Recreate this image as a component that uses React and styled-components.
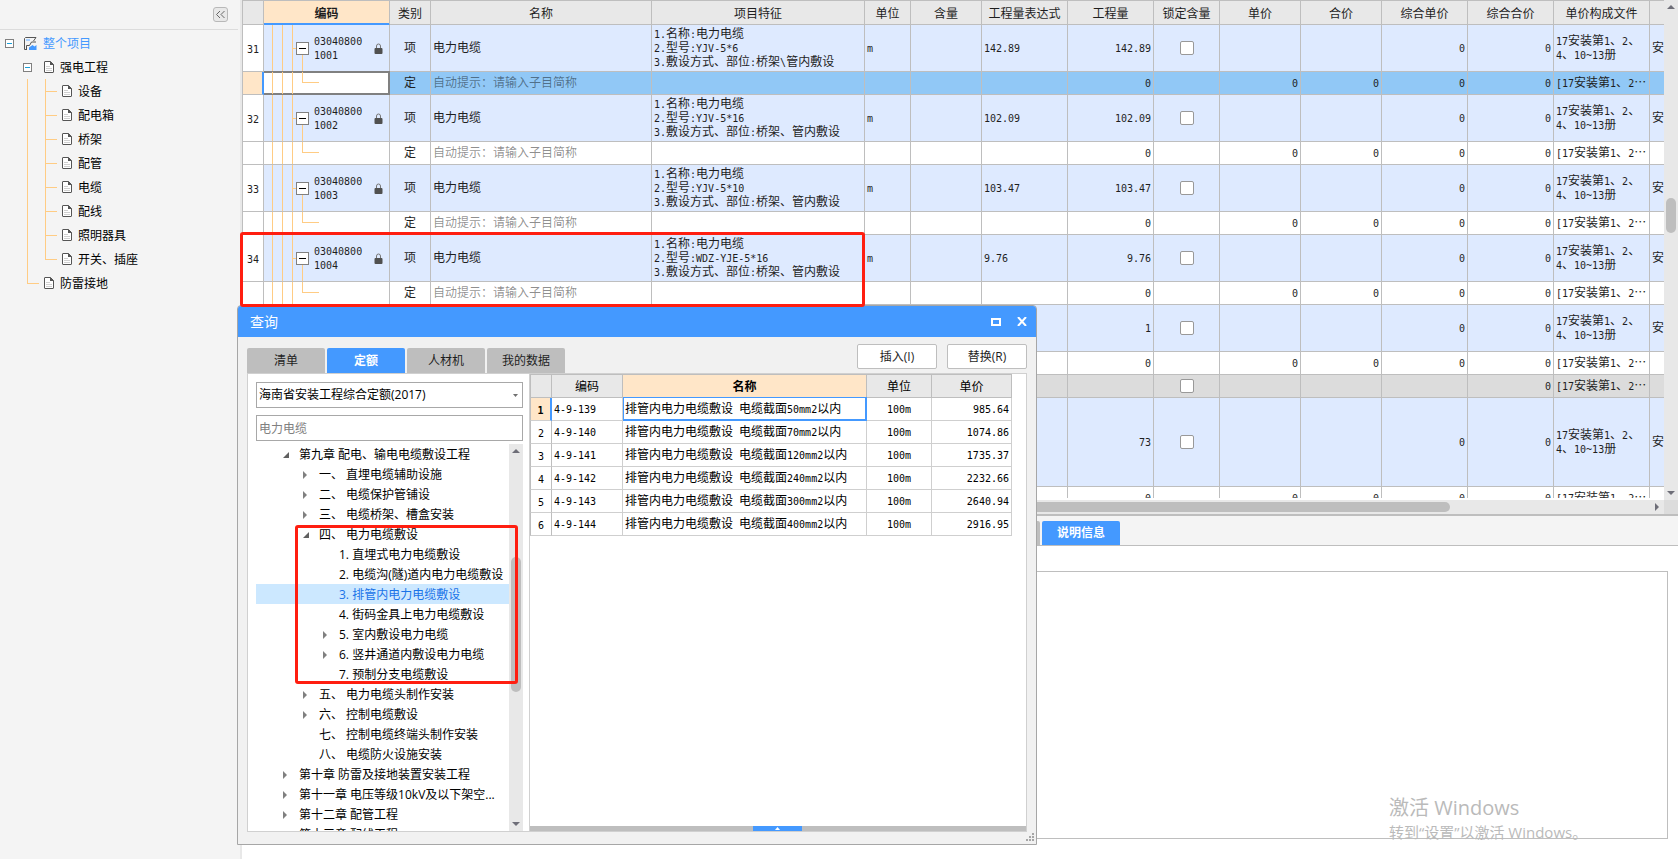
import { useState } from "react";
import styled, { createGlobalStyle, css } from "styled-components";

const uiFont = `"Open Sans", "Noto Sans CJK SC", sans-serif`;
const gridFont = `"Noto Sans CJK SC", sans-serif`;

const line = "#bebebe";
const blue = "#4499ff";
const cream = "#ffe6c8";
const guide = "#ffcc84";
const chrome = "#e8e8e8";

const GlobalStyle = createGlobalStyle`
  * {
    box-sizing: border-box;
  }

  body {
    margin: 0;
    font-family: ${uiFont};
    font-size: 12px;
    line-height: 14px;
    color: #000;
    background: #fff;
  }

  button, input, select {
    font: inherit;
    color: inherit;
    margin: 0;
    padding: 0;
  }

  ul {
    list-style: none;
    margin: 0;
    padding: 0;
  }
`;

const Page = styled.div`
  position: relative;
  display: flex;
  height: 100vh;
  overflow: hidden;
`;

/* ---------- sidebar ---------- */

const Sidebar = styled.aside`
  flex: 0 0 242px;
  background: #f4f4f4;
  border-right: 2px solid ${chrome};
`;

const SidebarHeader = styled.div`
  display: flex;
  align-items: center;
  justify-content: flex-end;
  height: 30px;
  margin-right: 2px;
  padding-right: 10px;
  border-bottom: 1px solid #dcdcdc;
`;

const CollapseButton = styled.button`
  display: flex;
  align-items: center;
  justify-content: center;
  width: 15px;
  height: 15px;
  border: 1px solid #b8b8b8;
  border-radius: 3px;
  background: ${chrome};
`;

const ProjectTree = styled.ul`
  padding-top: 1px;
`;

const ProjectRow = styled.li`
  display: flex;
  align-items: center;
  height: 24px;
  padding-left: ${(props) => props.$indent}px;
  color: ${(props) => (props.$active ? blue : "#000")};

  svg {
    margin-right: 6px;
  }
`;

const ProjectName = styled.span`
  padding-top: 2px;
`;

const Toggle = styled.button`
  display: flex;
  align-items: center;
  justify-content: center;
  width: 9px;
  height: 9px;
  margin-right: ${(props) => props.$gap}px;
  border: 1px solid #808080;
  background: #fff;

  &::after {
    content: "";
    width: 5px;
    height: 1px;
    background: #1a9fd8;
  }
`;

const PassLine = styled.span`
  align-self: stretch;
  width: 18px;
  border-left: 1px solid ${guide};
`;

const Branch = styled.span`
  display: flex;
  flex-direction: column;
  align-self: stretch;
  width: 12px;
  margin-right: 5px;

  &::before,
  &::after {
    content: "";
    flex: 1;
    border-left: 1px solid ${guide};
  }

  &::before {
    border-bottom: 1px solid ${guide};
  }

  ${(props) =>
    props.$last &&
    css`
      &::after {
        border-left-color: transparent;
      }
    `}
`;

/* ---------- main grid ---------- */

const Main = styled.main`
  flex: 1;
  min-width: 0;
  display: grid;
  grid-template-rows: 516fr 343fr;
`;

const GridPanel = styled.section`
  display: grid;
  grid-template-columns: minmax(0, 1fr) 14px;
  grid-template-rows: minmax(0, 1fr) 14px;
  min-height: 0;
  border-bottom: 2px solid ${line};
`;

const GridBody = styled.div`
  overflow: hidden;
  border-bottom: 2px solid #fff;
`;

const Corner = styled.div`
  background: #dcdcdc;
`;

const Table = styled.table`
  width: ${(props) => (props.$fit ? "0" : "100%")};
  table-layout: fixed;
  border-collapse: separate;
  border-spacing: 0;
  font-family: ${gridFont};
  color: ${(props) => (props.$fit ? "#000" : "#1e1e1e")};
  --rule: ${(props) => (props.$fit ? "#cfcfcf" : line)};
`;

const HeadCell = styled.th`
  height: ${(props) => props.$height}px;
  padding: 0;
  overflow: hidden;
  white-space: nowrap;
  font-weight: ${(props) => (props.$active ? 700 : 400)};
  background: ${(props) => (props.$active ? cream : chrome)};
  border: 1px solid ${line};
  border-left-width: 0;

  &:first-child {
    border-left-width: 1px;
  }

  ${(props) =>
    props.$underline &&
    css`
      border-bottom-color: ${blue};
      box-shadow: inset 0 -1px ${blue};
    `}
`;

const rowColors = {
  item: "#deeaff",
  quota: "#fff",
  selected: "#91c8f6",
  section: "#dcdcdc",
};

const Row = styled.tr`
  height: ${(props) => props.$height}px;
  background: ${(props) => rowColors[props.$kind]};
`;

const Cell = styled.td`
  padding: 0 2px 2px;
  overflow: hidden;
  white-space: pre;
  text-align: ${(props) => props.$align || "left"};
  color: ${(props) => (props.$hint ? "rgba(0, 0, 0, 0.45)" : "inherit")};
  border-right: 1px solid var(--rule);
  border-bottom: 1px solid var(--rule);

  ${(props) =>
    props.$focused &&
    css`
      border-color: ${blue};
      box-shadow: inset -1px -1px ${blue}, inset 1px 0 ${blue}, 0 -1px ${blue};
    `}
`;

const NumberCell = styled(Cell)`
  padding: 0;
  text-align: center;
  background: ${(props) => (props.$current ? cream : "#fff")};
  font-weight: ${(props) => (props.$current ? 700 : 400)};
  border-left: 1px solid ${line};
  border-right-color: ${line};
  ${(props) => props.$current && `border-right: 2px solid ${blue};`}
`;

const CodeCell = styled(Cell)`
  padding: 0;
  ${(props) =>
    props.$edit &&
    css`
      background: #fff;
      border-color: #808080;
      box-shadow: inset 0 1px #808080, inset -1px -1px #808080, 0 -1px #808080;
    `}
`;

const CodeBox = styled.div`
  display: flex;
  align-items: center;
  height: ${(props) => props.$height - 1}px;
  padding-right: 6px;
`;

const Guide = styled.span`
  align-self: stretch;
  flex: none;
  width: 10px;
  border-right: 1px solid ${guide};

  &:first-child {
    width: 9px;
  }
`;

const Stub = styled.span`
  flex: none;
  width: 3px;
  height: 1px;
  background: ${guide};
`;

const NodeColumn = styled.span`
  align-self: stretch;
  display: flex;
  flex-direction: column;
  align-items: center;
  flex: none;
  width: 13px;
  margin-right: 5px;

  &::before,
  &::after {
    content: "";
    flex: 1;
    width: 1px;
  }

  &::after {
    background: ${guide};
  }
`;

const NodeToggle = styled.button`
  display: flex;
  align-items: center;
  justify-content: center;
  width: 13px;
  height: 13px;
  border: 1px solid #808080;
  background: #fff;

  &::after {
    content: "";
    width: 7px;
    height: 1px;
    background: #000;
  }
`;

const Elbow = styled.span`
  align-self: flex-start;
  width: 17px;
  height: 50%;
  margin-left: 9px;
  border-left: 1px solid ${guide};
  border-bottom: 1px solid ${guide};
`;

const Code = styled.span`
  flex: 1;
  padding-bottom: 3px;
`;

const Latin = styled.span`
  font-family: "DejaVu Sans Mono", monospace;
  font-size: 10px;
  line-height: 8px;
`;

const Check = styled.input`
  appearance: none;
  display: block;
  width: 14px;
  height: 14px;
  margin: 2px auto 0;
  border: 1px solid #999;
  border-radius: 2px;
  background: #fff;

  &:checked {
    background: ${blue};
  }
`;

/* ---------- scroll bars ---------- */

const Track = styled.div`
  display: grid;
  ${(props) =>
    props.$horizontal ? "grid-template-columns" : "grid-template-rows"}: 14px ${(
    props
  ) => props.$parts.map((n) => `${n}fr`).join(" ")} 14px;
  min-height: 0;
  place-items: center;
  background: ${chrome};
`;

const Thumb = styled.div`
  width: ${(props) => (props.$horizontal ? "100%" : "10px")};
  height: ${(props) => (props.$horizontal ? "10px" : "100%")};
  border-radius: 5px;
  background: ${line};
`;

/* ---------- lower panel ---------- */

const DetailPanel = styled.section`
  display: flex;
  flex-direction: column;
  min-height: 0;
`;

const DetailTabs = styled.div`
  display: flex;
  align-items: flex-end;
  gap: 2px;
  height: 30px;
  padding-left: 720px;
  background: #f4f4f4;
  border-bottom: 1px solid ${line};
`;

const Tab = styled.button`
  flex: none;
  width: 78px;
  height: ${(props) => props.$height || 25}px;
  border: 0;
  border-radius: 2px 2px 0 0;
  color: ${(props) => (props.$active ? "#fff" : "#1e1e1e")};
  font-weight: ${(props) => (props.$active ? 700 : 400)};
  background: ${(props) => (props.$active ? blue : line)};
`;

const DetailBox = styled.div`
  flex: 1;
  margin: 25px 10px 20px;
  border: 1px solid ${line};
`;

const Watermark = styled.div`
  position: absolute;
  right: 89px;
  bottom: 15px;
  width: 200px;
  color: #bababa;
  font-size: 15px;
  line-height: 24px;
  white-space: nowrap;
  pointer-events: none;

  strong {
    display: block;
    font-size: 20px;
    font-weight: 400;
  }
`;

/* ---------- query window ---------- */

const Window = styled.section`
  position: absolute;
  left: 237px;
  top: 305px;
  display: flex;
  flex-direction: column;
  width: 800px;
  height: 540px;
  border: 1px solid #a6a6a6;
  border-radius: 4px 4px 0 0;
  background: #f1f1f1;
`;

const TitleBar = styled.header`
  display: flex;
  align-items: center;
  gap: 16px;
  height: 31px;
  padding: 0 9px 0 12px;
  border-radius: 3px 3px 0 0;
  color: #fff;
  font-size: 14px;
  background: ${blue};
`;

const Title = styled.span`
  flex: 1;
`;

const TitleButton = styled.button`
  display: flex;
  border: 0;
  background: none;
`;

const Toolbar = styled.div`
  display: flex;
  align-items: flex-end;
  height: 36px;
  padding: 0 9px;
`;

const Tabs = styled.div`
  display: flex;
  gap: 2px;
  flex: 1;
`;

const ActionButton = styled.button`
  width: 80px;
  height: 25px;
  margin: 0 0 4px 10px;
  border: 1px solid ${line};
  border-radius: 2px;
  color: #1e1e1e;
  background: #fff;
`;

const Panel = styled.div`
  flex: 1;
  display: flex;
  min-height: 0;
  margin: 0 9px 12px;
  border: 1px solid #d0d0d0;
  background: #fff;
`;

const Catalog = styled.div`
  display: flex;
  flex-direction: column;
  flex: none;
  width: 282px;
  padding: 8px 6px 0 8px;
  border-right: 1px solid #d0d0d0;
`;

const SelectBox = styled.label`
  display: grid;
  align-items: center;
  margin-bottom: 7px;

  > * {
    grid-area: 1 / 1;
  }

  svg {
    justify-self: end;
    margin-right: 5px;
    pointer-events: none;
  }
`;

const field = css`
  width: 100%;
  height: 26px;
  padding: 0 2px;
  border: 1px solid #a8a8a8;
  border-radius: 0;
  background: #fff;
`;

const Select = styled.select`
  ${field}
  appearance: none;
`;

const Search = styled.input`
  ${field}
  margin-bottom: 3px;
  color: #808080;
`;

const TreeArea = styled.div`
  flex: 1;
  display: grid;
  grid-template-columns: minmax(0, 1fr) 14px;
  min-height: 0;
`;

const CatalogTree = styled.ul`
  overflow: hidden;
`;

const CatalogRow = styled.li`
  display: flex;
  align-items: center;
  height: 20px;
  padding-top: 2px;
  padding-left: ${(props) => 27 + props.$level * 20}px;
  white-space: pre;
  color: ${(props) => (props.$active ? "#1a73e8" : "#000")};
  background: ${(props) => (props.$active ? "#cce8ff" : "transparent")};
`;

const Caret = styled.span`
  display: flex;
  flex: none;
  width: 16px;
`;

const Results = styled.div`
  flex: 1;
  min-width: 0;
  display: flex;
  flex-direction: column;
  justify-content: space-between;
`;

const Splitter = styled.div`
  display: flex;
  justify-content: center;
  height: 5px;
  padding-right: 2px;
  background: ${line};
`;

const SplitterHandle = styled.button`
  display: flex;
  align-items: center;
  justify-content: center;
  width: 49px;
  height: 5px;
  border: 0;
  background: ${blue};
`;

const Grip = styled.svg`
  position: absolute;
  right: 2px;
  bottom: 3px;
`;

const Marker = styled.div`
  position: absolute;
  left: ${(props) => props.$x}px;
  top: ${(props) => props.$y}px;
  width: ${(props) => props.$w}px;
  height: ${(props) => props.$h}px;
  border: 3px solid #ff1e10;
  border-radius: 3px;
  pointer-events: none;
`;

/* ---------- data ---------- */

const columns = [
  { title: "", width: 22 },
  { title: "编码", width: 126 },
  { title: "类别", width: 41 },
  { title: "名称", width: 221 },
  { title: "项目特征", width: 213 },
  { title: "单位", width: 46 },
  { title: "含量", width: 71 },
  { title: "工程量表达式", width: 86 },
  { title: "工程量", width: 86 },
  { title: "锁定含量", width: 66 },
  { title: "单价", width: 81 },
  { title: "合价", width: 81 },
  { title: "综合单价", width: 86 },
  { title: "综合合价", width: 86 },
  { title: "单价构成文件", width: 96 },
  { title: "", width: 86 },
];

const fileLong = "17安装第1、2、\n4、10~13册";
const fileShort = "[17安装第1、2…";

const item = (no, code, model, amount, place = "桥架、管内敷设") => ({
  kind: "item",
  height: 47,
  no,
  code,
  type: "项",
  name: "电力电缆",
  feature: `1.名称:电力电缆\n2.型号:${model}\n3.敷设方式、部位:${place}`,
  unit: "m",
  formula: amount,
  amount,
  check: true,
  total: "0",
  file: fileLong,
  extra: "安",
});

const quota = (kind = "quota") => ({
  kind,
  height: 23,
  type: "定",
  hint: "自动提示：请输入子目简称",
  amount: "0",
  price: "0",
  total: "0",
  file: fileShort,
});

const rows = [
  item("31", "03040800\n1001", "YJV-5*6", "142.89", "桥架\\管内敷设"),
  quota("selected"),
  item("32", "03040800\n1002", "YJV-5*16", "102.09"),
  quota(),
  item("33", "03040800\n1003", "YJV-5*10", "103.47"),
  quota(),
  item("34", "03040800\n1004", "WDZ-YJE-5*16", "9.76"),
  quota(),
  { kind: "item", height: 47, amount: "1", check: true, total: "0", file: fileLong, extra: "安" },
  { kind: "quota", height: 23, amount: "0", price: "0", total: "0", file: fileShort },
  { kind: "section", height: 23, check: true, sum: "0", file: fileShort },
  { kind: "item", height: 89, amount: "73", check: true, total: "0", file: fileLong, extra: "安" },
  { kind: "quota", height: 23, amount: "0", price: "0", total: "0", file: fileShort },
];

const devices = ["设备", "配电箱", "桥架", "配管", "电缆", "配线", "照明器具", "开关、插座"];

const catalog = [
  { level: 0, caret: "open", text: "第九章 配电、输电电缆敷设工程" },
  { level: 1, caret: "closed", text: "一、 直埋电缆辅助设施" },
  { level: 1, caret: "closed", text: "二、 电缆保护管铺设" },
  { level: 1, caret: "closed", text: "三、 电缆桥架、槽盒安装" },
  { level: 1, caret: "open", text: "四、 电力电缆敷设" },
  { level: 2, text: "1. 直埋式电力电缆敷设" },
  { level: 2, text: "2. 电缆沟(隧)道内电力电缆敷设" },
  { level: 2, text: "3. 排管内电力电缆敷设" },
  { level: 2, text: "4. 街码金具上电力电缆敷设" },
  { level: 2, caret: "closed", text: "5. 室内敷设电力电缆" },
  { level: 2, caret: "closed", text: "6. 竖井通道内敷设电力电缆" },
  { level: 2, text: "7. 预制分支电缆敷设" },
  { level: 1, caret: "closed", text: "五、 电力电缆头制作安装" },
  { level: 1, caret: "closed", text: "六、 控制电缆敷设" },
  { level: 1, text: "七、 控制电缆终端头制作安装" },
  { level: 1, text: "八、 电缆防火设施安装" },
  { level: 0, caret: "closed", text: "第十章 防雷及接地装置安装工程" },
  { level: 0, caret: "closed", text: "第十一章 电压等级10kV及以下架空..." },
  { level: 0, caret: "closed", text: "第十二章 配管工程" },
  { level: 0, caret: "closed", text: "第十三章 配线工程" },
];

const resultColumns = [
  { title: "", width: 22 },
  { title: "编码", width: 71 },
  { title: "名称", width: 244 },
  { title: "单位", width: 65 },
  { title: "单价", width: 80 },
];

const results = [
  { code: "4-9-139", size: 50, price: "985.64" },
  { code: "4-9-140", size: 70, price: "1074.86" },
  { code: "4-9-141", size: 120, price: "1735.37" },
  { code: "4-9-142", size: 240, price: "2232.66" },
  { code: "4-9-143", size: 300, price: "2640.94" },
  { code: "4-9-144", size: 400, price: "2916.95" },
];

/* ---------- icons ---------- */

const PageIcon = () => (
  <svg width="10" height="12" viewBox="0 0 10 12" fill="none">
    <path d="M1 .5h5.5l3 3V11a.5.5 0 0 1-.5.5H1A.5.5 0 0 1 .5 11V1A.5.5 0 0 1 1 .5z" fill="#fff" stroke="#555" />
    <path d="M6 0l4 4H6z" fill="#555" />
    <path d="M2 5.5h4M2 7.5h6M2 9.5h6" stroke="#d0d0d0" />
  </svg>
);

const ProjectIcon = () => (
  <svg width="13" height="13" viewBox="0 0 13 13" fill="none">
    <path d="M3 12.500H.5V1.500L1.500.5H12L9.500 4" stroke="#555" />
    <path d="M2 2h4v2H2z" fill="#a8d0ff" />
    <path d="M2.500 12V8.500h3l2-3.500H12" stroke="#555" />
    <path d="M5 13v-2.500L8.500 8l2 1.500L12.500 8v5z" fill={blue} />
  </svg>
);

const LockIcon = () => (
  <svg width="9" height="11" viewBox="0 0 9 11" fill="none">
    <path d="M2.500 5V3a2 2 0 0 1 4 0v2" stroke="#777" />
    <rect x="0.500" y="5" width="8" height="6" rx="1" fill="#505050" />
  </svg>
);

const ArrowIcon = ({ turn = 0, color = "#6e6e78" }) => (
  <svg width="8" height="8" viewBox="0 0 8 8">
    <path d="M0 6l4-4 4 4z" fill={color} transform={`rotate(${turn} 4 4)`} />
  </svg>
);

/* Half-width characters take exactly half of a full-width one in the grid */
function Mixed({ text = "" }) {
  return text
    .split(/([\x20-\x7e]+)/)
    .map((part, i) => (i % 2 ? <Latin key={i}>{part}</Latin> : part));
}

function ScrollBar({ horizontal, parts }) {
  return (
    <Track $horizontal={horizontal} $parts={parts}>
      <ArrowIcon turn={horizontal ? 270 : 0} />
      <span />
      <Thumb $horizontal={horizontal} />
      <span />
      <ArrowIcon turn={horizontal ? 90 : 180} />
    </Track>
  );
}

function ProjectSidebar() {
  return (
    <Sidebar>
      <SidebarHeader>
        <CollapseButton aria-label="收起">
          <svg width="9" height="7" viewBox="0 0 9 7" fill="none" stroke="#666">
            <path d="M4 0L.5 3.500 4 7M8.500 0L5 3.500 8.500 7" />
          </svg>
        </CollapseButton>
      </SidebarHeader>
      <ProjectTree>
        <ProjectRow $indent={5} $active>
          <Toggle $gap={10} aria-label="折叠" />
          <ProjectIcon />
          <ProjectName>整个项目</ProjectName>
        </ProjectRow>
        <ProjectRow $indent={23}>
          <Toggle $gap={12} aria-label="折叠" />
          <PageIcon />
          <ProjectName>强电工程</ProjectName>
        </ProjectRow>
        {devices.map((name, i) => (
          <ProjectRow $indent={27} key={name}>
            <PassLine />
            <Branch $last={i === devices.length - 1} />
            <PageIcon />
            <ProjectName>{name}</ProjectName>
          </ProjectRow>
        ))}
        <ProjectRow $indent={27}>
          <Branch $last />
          <PageIcon />
          <ProjectName>防雷接地</ProjectName>
        </ProjectRow>
      </ProjectTree>
    </Sidebar>
  );
}

function BudgetRow({ row }) {
  const isItem = row.kind === "item";
  const selected = row.kind === "selected";
  return (
    <Row $kind={row.kind} $height={row.height}>
      <NumberCell $current={selected}>
        <Mixed text={row.no} />
      </NumberCell>
      <CodeCell $edit={selected}>
        <CodeBox $height={row.height}>
          <Guide />
          <Guide />
          <Guide />
          {isItem ? (
            <>
              <Stub />
              <NodeColumn>
                <NodeToggle aria-label="折叠" />
              </NodeColumn>
              <Code>
                <Mixed text={row.code} />
              </Code>
              {row.code && <LockIcon />}
            </>
          ) : (
            <Elbow />
          )}
        </CodeBox>
      </CodeCell>
      <Cell $align="center">{row.type}</Cell>
      <Cell $hint={row.hint}>{row.hint || row.name}</Cell>
      <Cell>
        <Mixed text={row.feature} />
      </Cell>
      <Cell>
        <Mixed text={row.unit} />
      </Cell>
      <Cell />
      <Cell>
        <Mixed text={row.formula} />
      </Cell>
      <Cell $align="right">
        <Mixed text={row.amount} />
      </Cell>
      <Cell>{row.check && <Check type="checkbox" aria-label="锁定含量" />}</Cell>
      <Cell $align="right">
        <Mixed text={row.price} />
      </Cell>
      <Cell $align="right">
        <Mixed text={row.price} />
      </Cell>
      <Cell $align="right">
        <Mixed text={row.total} />
      </Cell>
      <Cell $align="right">
        <Mixed text={row.total || row.sum} />
      </Cell>
      <Cell>
        <Mixed text={row.file} />
      </Cell>
      <Cell>{row.extra}</Cell>
    </Row>
  );
}

function BudgetGrid() {
  return (
    <GridPanel>
      <GridBody>
        <Table>
          <colgroup>
            {columns.map((col, i) => (
              <col key={i} width={col.width} />
            ))}
          </colgroup>
          <thead>
            <tr>
              {columns.map((col, i) => (
                <HeadCell key={i} $height={25} $active={i === 1} $underline={i === 1}>
                  {col.title}
                </HeadCell>
              ))}
            </tr>
          </thead>
          <tbody>
            {rows.map((row, i) => (
              <BudgetRow key={i} row={row} />
            ))}
          </tbody>
        </Table>
      </GridBody>
      <ScrollBar parts={[184, 35, 253]} />
      <ScrollBar horizontal parts={[306, 888, 200]} />
      <Corner />
    </GridPanel>
  );
}

function QueryWindow() {
  const [tab, setTab] = useState("定额");
  const [current, setCurrent] = useState(7);
  const [keyword, setKeyword] = useState("电力电缆");

  return (
    <Window>
      <TitleBar>
        <Title>查询</Title>
        <TitleButton aria-label="最大化">
          <svg width="10" height="8" viewBox="0 0 10 8" fill="none">
            <rect x="1" y="1" width="8" height="6" stroke="#fff" strokeWidth="2" />
          </svg>
        </TitleButton>
        <TitleButton aria-label="关闭">
          <svg width="10" height="9" viewBox="0 0 10 9">
            <path d="M1 0l8 9M9 0L1 9" stroke="#fff" strokeWidth="2" />
          </svg>
        </TitleButton>
      </TitleBar>
      <Toolbar>
        <Tabs>
          {["清单", "定额", "人材机", "我的数据"].map((name) => (
            <Tab key={name} $active={name === tab} onClick={() => setTab(name)}>
              {name}
            </Tab>
          ))}
        </Tabs>
        <ActionButton>插入(I)</ActionButton>
        <ActionButton>替换(R)</ActionButton>
      </Toolbar>
      <Panel>
        <Catalog>
          <SelectBox>
            <Select aria-label="定额库">
              <option>海南省安装工程综合定额(2017)</option>
            </Select>
            <svg width="5" height="3" viewBox="0 0 5 3">
              <path d="M0 0h5L2.500 3z" fill="#707070" />
            </svg>
          </SelectBox>
          <Search
            aria-label="关键字"
            value={keyword}
            onChange={(e) => setKeyword(e.target.value)}
          />
          <TreeArea>
            <CatalogTree>
              {catalog.map((node, i) => (
                <CatalogRow
                  key={node.text}
                  $level={node.level}
                  $active={i === current}
                  onClick={() => setCurrent(i)}
                >
                  <Caret>
                    {node.caret === "open" && (
                      <svg width="6" height="6" viewBox="0 0 6 6">
                        <path d="M6 0v6H0z" fill="#606060" />
                      </svg>
                    )}
                    {node.caret === "closed" && (
                      <svg width="4" height="8" viewBox="0 0 4 8">
                        <path d="M0 0l4 4-4 4z" fill="#808080" />
                      </svg>
                    )}
                  </Caret>
                  {node.text}
                </CatalogRow>
              ))}
            </CatalogTree>
            <ScrollBar parts={[99, 135, 125]} />
          </TreeArea>
        </Catalog>
        <Results>
          <Table $fit>
            <colgroup>
              {resultColumns.map((col, i) => (
                <col key={i} width={col.width} />
              ))}
            </colgroup>
            <thead>
              <tr>
                {resultColumns.map((col, i) => (
                  <HeadCell key={i} $height={24} $active={i === 2}>
                    {col.title}
                  </HeadCell>
                ))}
              </tr>
            </thead>
            <tbody>
              {results.map((row, i) => (
                <Row key={row.code} $kind="quota" $height={23}>
                  <NumberCell $current={i === 0}>
                    <Mixed text={String(i + 1)} />
                  </NumberCell>
                  <Cell>
                    <Mixed text={row.code} />
                  </Cell>
                  <Cell $focused={i === 0}>
                    <Mixed text={`排管内电力电缆敷设 电缆截面${row.size}mm2以内`} />
                  </Cell>
                  <Cell $align="center">
                    <Mixed text="100m" />
                  </Cell>
                  <Cell $align="right">
                    <Mixed text={row.price} />
                  </Cell>
                </Row>
              ))}
            </tbody>
          </Table>
          <Splitter>
            <SplitterHandle aria-label="展开">
              <svg width="5" height="3" viewBox="0 0 5 3">
                <path d="M0 3h5L2.500 0z" fill="#fff" />
              </svg>
            </SplitterHandle>
          </Splitter>
        </Results>
      </Panel>
      <Grip width="8" height="8" viewBox="0 0 8 8" fill="#a6a6a6">
        <path d="M6 0h2v2H6zM3 3h2v2H3zM6 3h2v2H6zM0 6h2v2H0zM3 6h2v2H3zM6 6h2v2H6z" />
      </Grip>
    </Window>
  );
}

export default function App() {
  return (
    <Page>
      <GlobalStyle />
      <ProjectSidebar />
      <Main>
        <BudgetGrid />
        <DetailPanel>
          <DetailTabs>
            <Tab as="span" $height={24} />
            <Tab $active $height={24}>
              说明信息
            </Tab>
          </DetailTabs>
          <DetailBox />
        </DetailPanel>
      </Main>
      <Watermark>
        <strong>激活 Windows</strong>
        转到“设置”以激活 Windows。
      </Watermark>
      <QueryWindow />
      <Marker $x={240} $y={232} $w={625} $h={75} />
      <Marker $x={295} $y={525} $w={223} $h={159} />
    </Page>
  );
}
